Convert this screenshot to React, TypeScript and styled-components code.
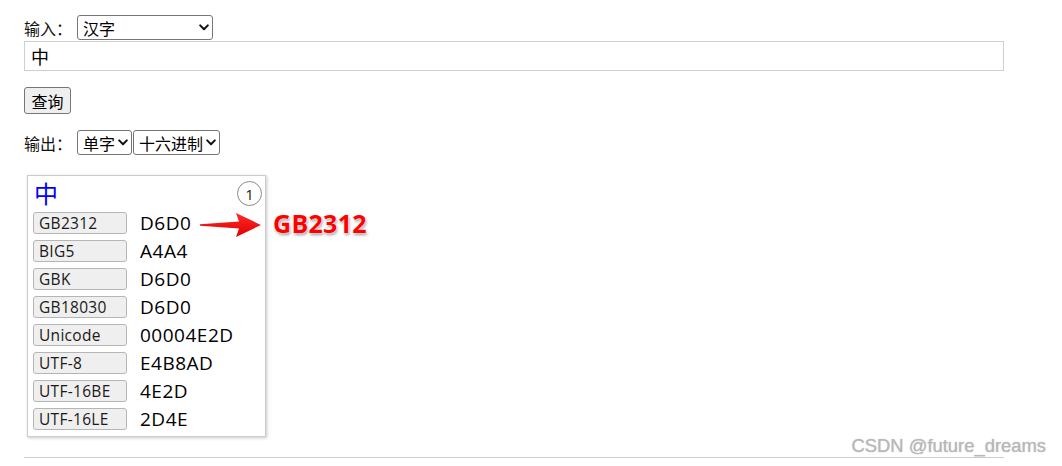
import React from "react";
import styled, { createGlobalStyle } from "styled-components";

const GlobalStyle = createGlobalStyle`
  html, body { margin: 0; padding: 0; background: #fff; }
  body { font-family: "Open Sans", "Noto Sans CJK SC", sans-serif; color: #000; }
`;

const Page = styled.div`
  position: relative;
  width: 1062px;
  height: 466px;
  box-sizing: border-box;
  padding: 15px 0 0 24px;
  overflow: hidden;
`;

const Line = styled.div<{ $mt?: number }>`
  display: flex;
  align-items: center;
  gap: 1px;
  height: 25px;
  margin-top: ${(p) => p.$mt ?? 0}px;
`;

const Label = styled.span`
  font-family: "Noto Sans CJK SC", sans-serif;
  font-size: 16px;
  color: #111;
  width: 52px;
`;

const SelectWrap = styled.span<{ $w: number }>`
  position: relative;
  display: inline-flex;
  width: ${(p) => p.$w}px;
  height: 25px;
`;

const Select = styled.select`
  appearance: none;
  -webkit-appearance: none;
  width: 100%;
  height: 100%;
  box-sizing: border-box;
  border: 1px solid #767676;
  border-radius: 3px;
  background: #fff;
  padding: 0 0 0 5px;
  font-family: "Noto Sans CJK SC", sans-serif;
  font-size: 16px;
  color: #000;
  outline: none;
`;

const Chevron = styled.svg`
  position: absolute;
  right: 4px;
  top: 9px;
  width: 10px;
  height: 7px;
  pointer-events: none;
`;

const TextInput = styled.input`
  display: block;
  margin-top: 1px;
  width: 980px;
  height: 30px;
  box-sizing: border-box;
  border: 1px solid #cfcfcf;
  padding: 0 0 0 6px;
  font-family: "Noto Sans CJK SC", sans-serif;
  font-size: 18px;
  color: #000;
  outline: none;
`;

const Button = styled.button`
  display: block;
  margin-top: 16px;
  width: 47px;
  height: 27px;
  box-sizing: border-box;
  border: 1px solid #767676;
  border-radius: 3px;
  background: #efefef;
  padding: 0;
  font-family: "Noto Sans CJK SC", sans-serif;
  font-size: 16px;
  color: #000;
`;

const Card = styled.div`
  position: relative;
  margin: 20px 0 0 3px;
  width: 239px;
  box-sizing: border-box;
  border: 1px solid #cccccc;
  box-shadow: 1px 1px 3px rgba(0, 0, 0, 0.22);
  padding: 0 5px 6px 5px;
  background: #fff;
`;

const Glyph = styled.div`
  height: 36px;
  line-height: 34px;
  font-family: "Noto Sans CJK SC", sans-serif;
  font-size: 24px;
  color: #0000ff;
  padding-left: 1px;
`;

const Badge = styled.span`
  position: absolute;
  top: 5px;
  right: 3px;
  width: 25px;
  height: 25px;
  box-sizing: border-box;
  border: 1px solid #8a8a8a;
  border-radius: 50%;
  display: flex;
  align-items: center;
  justify-content: center;
  font-size: 15px;
  color: #222;
`;

const Row = styled.div`
  display: flex;
  align-items: center;
  height: 22px;
  & + & { margin-top: 6px; }
`;

const Tag = styled.span`
  width: 94px;
  height: 22px;
  box-sizing: border-box;
  border: 1px solid #b5b5b5;
  border-radius: 3px;
  background: #efefef;
  padding-left: 5px;
  font-size: 15.5px;
  letter-spacing: 0.3px;
  line-height: 20px;
  color: #1a1a1a;
  white-space: nowrap;
`;

const Value = styled.span`
  margin-left: 13px;
  font-size: 19px;
  letter-spacing: 0.5px;
  line-height: 22px;
  color: #000;
`;

const Rule = styled.hr`
  margin: 20px 0 0 0;
  width: 980px;
  height: 0;
  border: none;
  border-top: 1px solid #cccccc;
`;

const Arrow = styled.svg`
  position: absolute;
  left: 199px;
  top: 211px;
  width: 66px;
  height: 28px;
`;

const Callout = styled.span`
  position: absolute;
  left: 273px;
  top: 211px;
  font-size: 25px;
  font-weight: 700;
  line-height: 25px;
  letter-spacing: 0.3px;
  color: #ff0000;
  text-shadow: 0 0 1px #fff, 0 0 2px #fff, 1px 2px 3px rgba(0, 0, 0, 0.4);
`;

const Watermark = styled.span`
  position: absolute;
  right: 16px;
  top: 435px;
  font-family: "Liberation Sans", Arial, sans-serif;
  font-size: 18.4px;
  line-height: 22px;
  color: #b8b8b8;
  text-shadow: 0 0 1px rgba(120, 120, 120, 0.5);
`;

const ChevronIcon = () => (
  <Chevron viewBox="0 0 10 7">
    <path d="M1.2 1.4 L5 5.2 L8.8 1.4" fill="none" stroke="#111" strokeWidth="2" strokeLinecap="round" strokeLinejoin="round" />
  </Chevron>
);

const rows: [string, string][] = [
  ["GB2312", "D6D0"],
  ["BIG5", "A4A4"],
  ["GBK", "D6D0"],
  ["GB18030", "D6D0"],
  ["Unicode", "00004E2D"],
  ["UTF-8", "E4B8AD"],
  ["UTF-16BE", "4E2D"],
  ["UTF-16LE", "2D4E"],
];

export default function App() {
  return (
    <>
      <GlobalStyle />
      <Page>
        <Line>
          <Label>输入：</Label>
          <SelectWrap $w={136}>
            <Select defaultValue="汉字">
              <option>汉字</option>
            </Select>
            <ChevronIcon />
          </SelectWrap>
        </Line>
        <TextInput defaultValue="中" />
        <Button>查询</Button>
        <Line $mt={16}>
          <Label>输出：</Label>
          <SelectWrap $w={55}>
            <Select defaultValue="单字">
              <option>单字</option>
            </Select>
            <ChevronIcon />
          </SelectWrap>
          <SelectWrap $w={87}>
            <Select defaultValue="十六进制">
              <option>十六进制</option>
            </Select>
            <ChevronIcon />
          </SelectWrap>
        </Line>
        <Card>
          <Glyph>中</Glyph>
          <Badge>1</Badge>
          {rows.map(([k, v]) => (
            <Row key={k}>
              <Tag>{k}</Tag>
              <Value>{v}</Value>
            </Row>
          ))}
        </Card>
        <Rule />
        <Arrow viewBox="0 0 66 28">
          <defs>
            <linearGradient id="ag" x1="0" y1="0" x2="0" y2="1">
              <stop offset="0" stopColor="#ff2a2a" />
              <stop offset="1" stopColor="#e00000" />
            </linearGradient>
          </defs>
          <path d="M1 13.2 L40 10.5 L37 2 L62 14 L37 26 L40 17.5 L1 14.8 Z" fill="url(#ag)" />
        </Arrow>
        <Callout>GB2312</Callout>
        <Watermark>CSDN @future_dreams</Watermark>
      </Page>
    </>
  );
}
